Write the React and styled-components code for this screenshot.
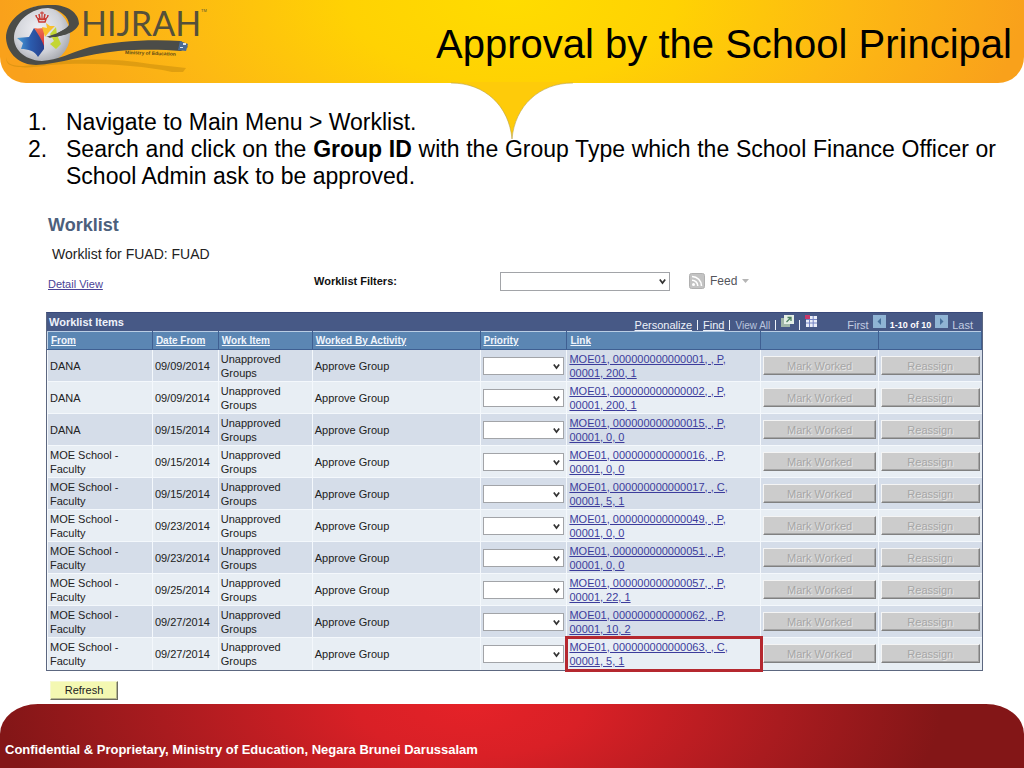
import React from "react";
import styled, { createGlobalStyle } from "styled-components";

const Global = createGlobalStyle`
  * { box-sizing: border-box; }
  html, body, #root { height: 100%; }
  body { margin: 0; background: #fff; font-family: "Liberation Sans", Arial, sans-serif; color: #000; }
  button, select { font-family: inherit; }
`;

const Slide = styled.div`
  min-height: 100%;
  display: flex;
  flex-direction: column;
  overflow: hidden;
`;

const Banner = styled.header`
  position: relative;
  flex: none;
  height: 83px;
  padding: 0 12px 0 0;
  display: flex;
  align-items: center;
  justify-content: space-between;
  border-radius: 0 0 26px 26px;
  background: radial-gradient(ellipse 50% 260px at 50% 0, #ffdc00 0%, #ffd203 32%, #fdb913 66%, #f9a11b 100%);
`;

const Pointer = styled.svg`
  position: absolute;
  top: 82px;
  left: 50%;
  margin-left: -61px;
  width: 122px;
  height: 58px;
`;

const Logo = styled.svg`
  flex: none;
  align-self: flex-start;
  width: 216px;
  height: 83px;
`;

const Title = styled.h1`
  margin: 0;
  padding-top: 4px;
  font-size: 40px;
  font-weight: 400;
  line-height: 48px;
  white-space: nowrap;
`;

const Steps = styled.ol`
  position: relative;
  flex: none;
  margin: 26px 28px 0;
  padding: 0 0 0 38px;
  list-style: none;
  counter-reset: step;
  font-size: 23px;
  line-height: 27px;
  text-align: justify;
`;

const Step = styled.li`
  counter-increment: step;
  &::before {
    content: counter(step) ".";
    float: left;
    width: 38px;
    margin-left: -38px;
    text-align: left;
  }
`;

const Worklist = styled.main`
  flex: 1 0 auto;
  margin: 0 41px 0 46px;
  padding-top: 24px;
  color: #222;
  font-size: 11px;
`;

const Heading = styled.h2`
  margin: 0 0 0 2px;
  font-size: 18px;
  line-height: 22px;
  color: #4c607c;
`;

const Owner = styled.p`
  margin: 10px 0 0 6px;
  font-size: 14px;
  line-height: 16px;
`;

const Filters = styled.div`
  display: grid;
  grid-template-columns: 266px 186px 170px 1fr;
  align-items: center;
  height: 20px;
  margin: 9px 0 21px 2px;
`;

const TextLink = styled.a`
  align-self: end;
  justify-self: start;
  color: #4a4396;
  text-decoration: underline;
  line-height: 14px;
`;

const FilterLabel = styled.label`
  font-weight: 700;
  color: #111;
`;

const SelectBox = styled.span`
  position: relative;
  display: block;
  width: 100%;
`;

const Select = styled.select`
  appearance: none;
  display: block;
  width: 100%;
  height: ${(p) => (p.$tall ? 19 : 18)}px;
  border: 1px solid #a2a4a8;
  border-radius: 0;
  background: #fff;
`;

const SelectArrow = styled.svg`
  position: absolute;
  right: 4px;
  top: 6px;
  width: 7px;
  height: 7px;
  pointer-events: none;
`;

const Feed = styled.button`
  display: flex;
  align-items: center;
  gap: 5px;
  margin-left: 19px;
  padding: 0;
  border: 0;
  background: none;
  color: #54555c;
  font-size: 12px;
`;

const Panel = styled.section`
  border: 1px solid #5c6780;
  border-top-color: #39497a;
`;

const PanelBar = styled.div`
  display: flex;
  align-items: center;
  justify-content: space-between;
  height: 18px;
  padding: 0 9px 0 2px;
  background: #475986;
  color: #eef2fa;
`;

const PanelTitle = styled.h3`
  margin: 0;
  font-size: 11px;
  line-height: 18px;
`;

const PanelTools = styled.div`
  display: flex;
  align-items: center;
  gap: 5px;
  height: 18px;
  padding-top: 6px;
  line-height: 13px;
`;

const ToolLink = styled.a`
  color: ${(p) => (p.$dim ? "#b9c5de" : "#eef2fa")};
  font-size: ${(p) => (p.$dim ? 10 : 11)}px;
  text-decoration: ${(p) => (p.$dim ? "none" : "underline")};
`;

const Bar = styled.span`
  width: 1px;
  height: 10px;
  background: #eef2fa;
`;

const IconButton = styled.button`
  display: block;
  height: 13px;
  margin-bottom: 8px;
  padding: 0;
  border: 0;
  background: none;
  svg { display: block; }
`;

const Pager = styled.div`
  display: flex;
  align-items: center;
  gap: 4px;
  margin-left: 24px;
  color: #c3cde2;
  strong { font-size: 9px; color: #fff; }
`;

const Table = styled.table`
  width: 100%;
  table-layout: fixed;
  border-collapse: collapse;
  line-height: 14px;
`;

const HeadCell = styled.th`
  height: 18px;
  padding: 0 0 0 3px;
  border: 1px solid #3f5f92;
  border-top-color: #b9cde4;
  border-left-color: #c4d5e8;
  background: #5b86b3;
  text-align: left;
  font-size: 10px;
  line-height: 16px;
  a { color: #eff5fc; text-decoration: underline; }
`;

const Row = styled.tr`
  background: ${(p) => (p.$shade ? "#d5dde9" : "#e8eef4")};
`;

const Cell = styled.td`
  height: 32px;
  padding: ${(p) => (p.$control ? "0 2px" : "0 0 0 2px")};
  border-top: 1px solid #f4f8fc;
  border-left: 1px solid #f4f8fc;
  vertical-align: middle;
  ${(p) => p.$marked && "outline: 3px solid #b5282f; outline-offset: -1px;"}
  a { display: block; color: #3c3c9c; }
`;

const Action = styled.button`
  display: block;
  width: 100%;
  height: 19px;
  padding: 0;
  border: 1px solid;
  border-color: #f4f4f4 #808080 #808080 #f4f4f4;
  box-shadow: inset -1px -1px 0 #a5a5a5;
  background: #cccccc;
  color: #a6a6a6;
  text-shadow: 1px 1px 0 #e6e6e6;
  font-size: 11px;
  line-height: 16px;
`;

const Refresh = styled.button`
  display: block;
  width: 68px;
  height: 19px;
  margin: 10px 0 0 4px;
  padding: 0;
  border: 1px solid;
  border-color: #f7f9d0 #6c6c60 #6c6c60 #f7f9d0;
  box-shadow: inset -1px -1px 0 #b5b78e;
  background: #f4f8b2;
  color: #222;
  font-size: 11px;
  line-height: 16px;
`;

const Footer = styled.footer`
  flex: none;
  height: 64px;
  padding: 38px 5px 0;
  border-radius: 38px 38px 0 0 / 30px 30px 0 0;
  background: radial-gradient(ellipse 46% 220px at 46% 0, #e52228 0%, #d92026 24%, #a91b1f 66%, #831617 100%);
  color: #fff;
  font-size: 13px;
  font-weight: 700;
  line-height: 16px;
`;

const widths = [105, 66, 94, 168, 87, 194, 118, 103];
const headings = ["From", "Date From", "Work Item", "Worked By Activity", "Priority", "Link", "", ""];

const faculty = "MOE School - Faculty";
const items = [
  ["DANA", "09/09/2014", "MOE01, 000000000000001, , P,", "00001, 200, 1"],
  ["DANA", "09/09/2014", "MOE01, 000000000000002, , P,", "00001, 200, 1"],
  ["DANA", "09/15/2014", "MOE01, 000000000000015, , P,", "00001, 0, 0"],
  [faculty, "09/15/2014", "MOE01, 000000000000016, , P,", "00001, 0, 0"],
  [faculty, "09/15/2014", "MOE01, 000000000000017, , C,", "00001, 5, 1"],
  [faculty, "09/23/2014", "MOE01, 000000000000049, , P,", "00001, 0, 0"],
  [faculty, "09/23/2014", "MOE01, 000000000000051, , P,", "00001, 0, 0"],
  [faculty, "09/25/2014", "MOE01, 000000000000057, , P,", "00001, 22, 1"],
  [faculty, "09/27/2014", "MOE01, 000000000000062, , P,", "00001, 10, 2"],
  [faculty, "09/27/2014", "MOE01, 000000000000063, , C,", "00001, 5, 1"],
];

function DropDown({ tall, ...rest }) {
  return (
    <SelectBox>
      <Select $tall={tall} {...rest}><option value="" /></Select>
      <SelectArrow viewBox="0 0 7 7"><path d="M0.8 1.5 3.5 5 6.2 1.5" fill="none" stroke="#333" strokeWidth="1.7" /></SelectArrow>
    </SelectBox>
  );
}

function HijrahLogo() {
  return (
    <Logo viewBox="0 0 216 83" role="img" aria-label="Hijrah, Ministry of Education">
      <defs>
        <radialGradient id="globe" cx="45%" cy="40%" r="62%">
          <stop offset="0" stopColor="#f0f1f5" />
          <stop offset="0.65" stopColor="#d0d2d8" />
          <stop offset="1" stopColor="#a3a5ab" />
        </radialGradient>
        <linearGradient id="blue" x1="0" x2="1">
          <stop offset="0" stopColor="#4aa0d8" />
          <stop offset="0.5" stopColor="#2b5cae" />
          <stop offset="1" stopColor="#27408c" />
        </linearGradient>
        <linearGradient id="red" x1="0" y1="0" x2="0" y2="1">
          <stop offset="0" stopColor="#f07050" />
          <stop offset="1" stopColor="#d3303c" />
        </linearGradient>
      </defs>
      <path d="M7 57C5 64 14 68 32 65 60 59 110 57 150 64L186 68 183 72 172 72C140 65 90 62 50 65 25 69 3 69 7 57Z" fill="#c48a0c" opacity="0.5" />
      <circle cx="41" cy="35" r="29" fill="url(#globe)" />
      <path d="M48 38C60 36 74 35 79 24 79 12 66 4 50 5 22 4 6 22 6 38 7 54 20 65 36 65 60 64 86 54 118 51 145 49 165 50 181 51L188 47 181 41C150 39 115 41 90 47 70 53 58 60 42 61 23 60 13 48 14 36 16 20 32 8 48 8 60 9 69 17 69 25 66 30 56 33 48 38Z" fill="#4b4c48" />
      <path d="M180 41 188 44 186 51 178 50Z" fill="#4a6a96" />
      <path d="M183 43h3v2h-3zM180 47h3v1h-3z" fill="#dfe4ec" />
      <path d="M17 38 29 37 34 28 40 35 44 44V49L38 57C35 51 28 49 21 49L23 43Z" fill="url(#blue)" />
      <path d="M34 28C38 29 41 28 44 28V46C42 40 38 34 34 28Z" fill="url(#red)" />
      <path d="M42 27 47 28 46 23 50 26 55 26 49 32 45 37Z" fill="#f9c02c" />
      <path d="M50 34 56 27 57 35 61 44 56 49 50 44 54 41Z" fill="#c4d635" />
      <path d="M46 37 58 33 69 27 66 34 56 37Z" fill="#4b4c48" />
      <path d="M38 19h8l-1 3h-6zM36 15c0 6 12 6 12 0M39 14l1 5M45 14l-1 5" fill="none" stroke="#c93932" strokeWidth="1.500" />
      <path d="M40 13h4M42 11.500v7" stroke="#c93932" strokeWidth="1.200" />
      <text x="81" y="36" fontFamily="Lato, sans-serif" fontSize="34" fill="#55503a">HIJRAH</text>
      <text x="201" y="12" fontFamily="Liberation Sans, sans-serif" fontSize="4" fill="#55503a">TM</text>
      <text x="125" y="54" fontFamily="Liberation Sans, sans-serif" fontSize="5" fontWeight="700" fill="#5a4a16" transform="rotate(2 125 54)">Ministry of Education</text>
    </Logo>
  );
}

export default function App() {
  return (
    <>
      <Global />
      <Slide>
        <Banner>
          <HijrahLogo />
          <Title>Approval by the School Principal</Title>
          <Pointer viewBox="0 0 122 58" aria-hidden="true">
            <path d="M0 0H122V1C88 1 64 24 61 57 58 24 34 1 0 1Z" fill="#fecb0a" />
            <path d="M0 1C34 1 58 24 61 57 64 24 88 1 122 1" fill="none" stroke="#b9a24c" strokeWidth="0.600" />
          </Pointer>
        </Banner>
        <Steps>
          <Step>Navigate to Main Menu &gt; Worklist.</Step>
          <Step>
            Search and click on the <b>Group ID</b> with the Group Type which the School Finance Officer or School
            Admin ask to be approved.
          </Step>
        </Steps>
        <Worklist>
          <Heading>Worklist</Heading>
          <Owner>Worklist for FUAD: FUAD</Owner>
          <Filters>
            <TextLink href="#detail">Detail View</TextLink>
            <FilterLabel htmlFor="filters">Worklist Filters:</FilterLabel>
            <DropDown tall id="filters" />
            <Feed type="button">
              <svg width="16" height="16" viewBox="0 0 16 16" aria-hidden="true">
                <rect x="0.5" y="0.5" width="15" height="15" rx="2" fill="#c3c3c3" stroke="#b0b0b0" />
                <circle cx="4.500" cy="11.500" r="1.500" fill="#fff" />
                <path d="M3 7.200a5.800 5.800 0 0 1 5.800 5.800M3 3.500a9.500 9.500 0 0 1 9.500 9.500" fill="none" stroke="#fff" strokeWidth="1.600" />
              </svg>
              Feed
              <svg width="7" height="4" viewBox="0 0 7 4" aria-hidden="true"><path d="M0 0H7L3.500 4Z" fill="#b5b5b5" /></svg>
            </Feed>
          </Filters>
          <Panel>
            <PanelBar>
              <PanelTitle>Worklist Items</PanelTitle>
              <PanelTools>
                <ToolLink href="#personalize">Personalize</ToolLink>
                <Bar />
                <ToolLink href="#find">Find</ToolLink>
                <Bar />
                <ToolLink $dim href="#all">View All</ToolLink>
                <Bar />
                <IconButton type="button" aria-label="Open in new window">
                  <svg width="13" height="12" viewBox="0 0 13 12">
                    <path d="M0 3H9V12H0Z" fill="#9fb6a8" />
                    <path d="M3 0H13V9H3Z" fill="#e4efe6" />
                    <path d="M5.500 7 10 2.500M6.500 2.500H10V6" fill="none" stroke="#4c8060" strokeWidth="1.300" />
                  </svg>
                </IconButton>
                <Bar />
                <IconButton type="button" aria-label="Download">
                  <svg width="13" height="12" viewBox="0 0 13 12">
                    <path d="M1 1H12V12H1Z" fill="#e9edf8" />
                    <path d="M1 4.500H12M1 8H12M4.500 1V12M8.200 1V12" stroke="#7484c4" fill="none" />
                    <path d="M0 0H5V4H0Z" fill="#c8386a" />
                  </svg>
                </IconButton>
                <Pager>
                  First
                  <IconButton type="button" aria-label="Previous page">
                    <svg width="13" height="13" viewBox="0 0 13 13"><path d="M0 0H13V13H0Z" fill="#8fb4d4" /><path d="M8 3V10L4.500 6.500Z" fill="#47709c" /></svg>
                  </IconButton>
                  <strong>1-10 of 10</strong>
                  <IconButton type="button" aria-label="Next page">
                    <svg width="13" height="13" viewBox="0 0 13 13"><path d="M0 0H13V13H0Z" fill="#8fb4d4" /><path d="M5 3V10L8.500 6.500Z" fill="#47709c" /></svg>
                  </IconButton>
                  Last
                </Pager>
              </PanelTools>
            </PanelBar>
            <Table>
              <colgroup>
                {widths.map((w, i) => <col key={i} style={{ width: `${(w / 935) * 100}%` }} />)}
              </colgroup>
              <thead>
                <tr>
                  {headings.map((h, i) => <HeadCell key={i} scope="col">{h && <a href="#sort">{h}</a>}</HeadCell>)}
                </tr>
              </thead>
              <tbody>
                {items.map(([from, date, link, rest], i) => (
                  <Row key={link} $shade={i % 2 === 0}>
                    <Cell>{from === faculty ? <>MOE School -<br />Faculty</> : from}</Cell>
                    <Cell>{date}</Cell>
                    <Cell>Unapproved<br />Groups</Cell>
                    <Cell>Approve Group</Cell>
                    <Cell $control><DropDown aria-label={`Priority ${i + 1}`} /></Cell>
                    <Cell $marked={i === items.length - 1}><a href="#item">{link}<br />{rest}</a></Cell>
                    <Cell $control><Action type="button" disabled>Mark Worked</Action></Cell>
                    <Cell $control><Action type="button" disabled>Reassign</Action></Cell>
                  </Row>
                ))}
              </tbody>
            </Table>
          </Panel>
          <Refresh type="button">Refresh</Refresh>
        </Worklist>
        <Footer>Confidential &amp; Proprietary, Ministry of Education, Negara Brunei Darussalam</Footer>
      </Slide>
    </>
  );
}
